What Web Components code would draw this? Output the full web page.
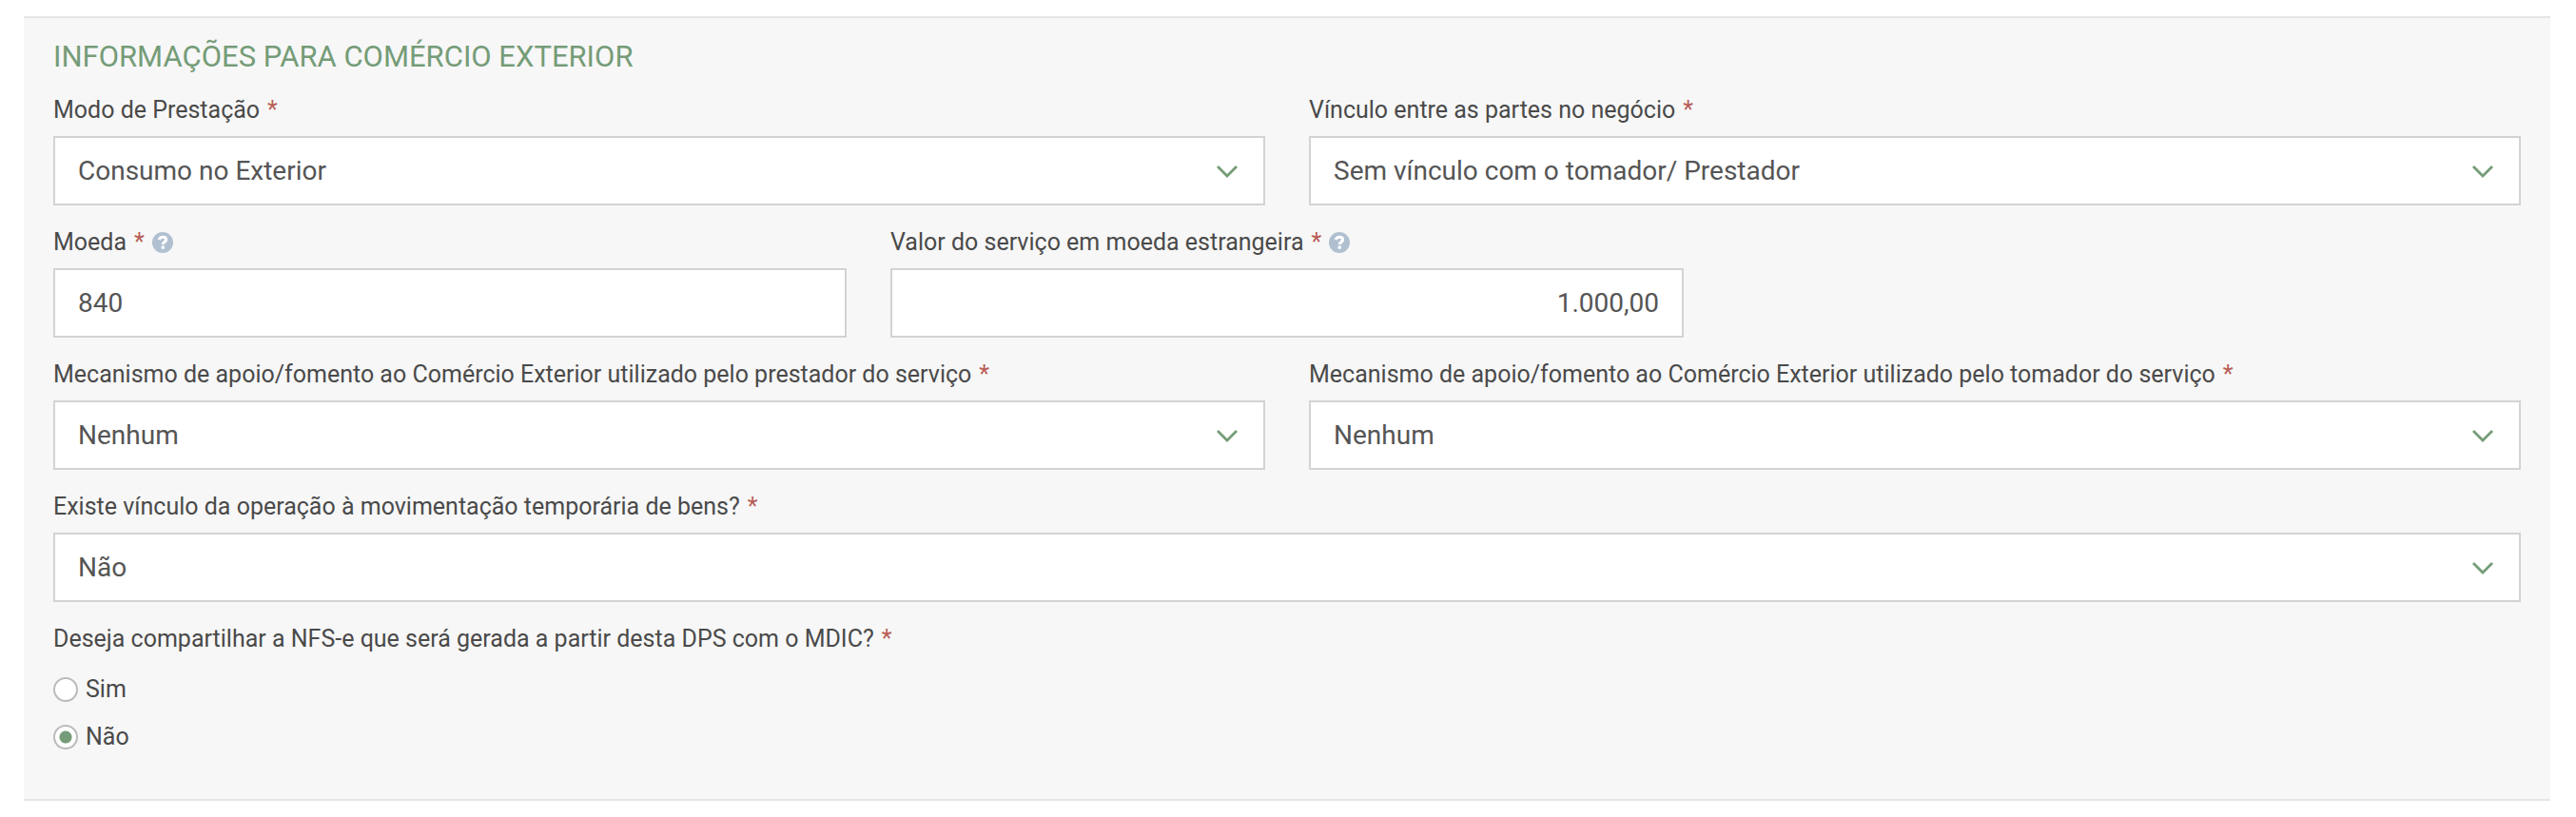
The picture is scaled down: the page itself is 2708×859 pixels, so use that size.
<!DOCTYPE html>
<html lang="pt-BR">
<head>
<meta charset="utf-8">
<meta name="viewport" content="width=device-width, initial-scale=1">
<title>Informações para Comércio Exterior</title>
<style>
    body {
        margin: 0;
        padding: 17px 27px 17px 25px;
        background: #fff;
        color: #4a4a4a;
        font-family: Roboto, "Liberation Sans", sans-serif;
        font-size: 25px;
        line-height: 32px;
        --green: #759c78;
        --red: #b85c55;
        --line: #d3d3d3;
        --value: #555;
    }
</style>
</head>
<body>
<form-panel heading="INFORMAÇÕES PARA COMÉRCIO EXTERIOR">
    <form-row columns="2">
        <select-field label="Modo de Prestação" options="Consumo no Exterior|Transfronteiriço|Presença Comercial no Brasil"></select-field>
        <select-field label="Vínculo entre as partes no negócio" options="Sem vínculo com o tomador/ Prestador|Controlada|Controladora|Coligada"></select-field>
    </form-row>
    <form-row columns="3">
        <text-field label="Moeda" value="840" help></text-field>
        <text-field label="Valor do serviço em moeda estrangeira" value="1.000,00" align="right" help></text-field>
    </form-row>
    <form-row columns="2">
        <select-field label="Mecanismo de apoio/fomento ao Comércio Exterior utilizado pelo prestador do serviço" options="Nenhum"></select-field>
        <select-field label="Mecanismo de apoio/fomento ao Comércio Exterior utilizado pelo tomador do serviço" options="Nenhum"></select-field>
    </form-row>
    <form-row columns="1">
        <select-field label="Existe vínculo da operação à movimentação temporária de bens?" options="Não|Sim"></select-field>
    </form-row>
    <form-row columns="1">
        <radio-field label="Deseja compartilhar a NFS-e que será gerada a partir desta DPS com o MDIC?" options="Sim|Não" value="Não"></radio-field>
    </form-row>
</form-panel>

<script>
const fieldStyles = `
    :host {
        display: block;
        min-width: 0;
    }
    .label {
        display: flex;
        align-items: center;
        margin-bottom: 11px;
        padding: 0;
    }
    .required {
        margin-left: 8px;
        color: var(--red);
    }
    help-icon {
        margin-left: 8px;
    }
    .control {
        display: block;
        box-sizing: border-box;
        width: 100%;
        height: 73px;
        margin: 0;
        padding: 0 24px;
        border: 2px solid var(--line);
        border-radius: 0;
        background: #fff;
        color: var(--value);
        font: inherit;
        font-size: 28px;
    }
    .control:focus {
        outline: none;
        border-color: var(--green);
    }
`;

class FormPanel extends HTMLElement {
    constructor() {
        super();
        this.attachShadow({ mode: 'open' });
    }

    connectedCallback() {
        this.shadowRoot.innerHTML = `
            <style>
                :host {
                    display: block;
                    padding: 23px 31px 49px;
                    border-top: 2px solid #e6e6e6;
                    border-bottom: 2px solid #e6e6e6;
                    background: #f7f7f7;
                }
                h2 {
                    margin: 0 0 22px;
                    color: var(--green);
                    font-size: 31px;
                    font-weight: 400;
                    line-height: 36px;
                }
                .rows {
                    display: flex;
                    flex-direction: column;
                    gap: 23px;
                }
            </style>
            <section aria-labelledby="heading">
                <h2 id="heading">${this.getAttribute('heading')}</h2>
                <div class="rows"><slot></slot></div>
            </section>
        `;
    }
}

class FormRow extends HTMLElement {
    constructor() {
        super();
        this.attachShadow({ mode: 'open' });
    }

    connectedCallback() {
        this.shadowRoot.innerHTML = `
            <style>
                :host {
                    display: grid;
                    grid-template-columns: repeat(${this.getAttribute('columns')}, minmax(0, 1fr));
                    gap: 46px;
                }
            </style>
            <slot></slot>
        `;
    }
}

class HelpIcon extends HTMLElement {
    constructor() {
        super();
        this.attachShadow({ mode: 'open' });
    }

    connectedCallback() {
        this.shadowRoot.innerHTML = `
            <style>
                :host {
                    display: block;
                }
                svg {
                    display: block;
                    width: 22px;
                    height: 22px;
                }
            </style>
            <svg viewBox="0 0 22 22" aria-hidden="true">
                <circle cx="11" cy="11" r="11" fill="#b0c0d0"/>
                <path d="M7.1 8C7.8 6.2 9.1 5.2 11 5.2c2.2 0 3.6 1.2 3.6 2.9 0 2.5-3.3 2.4-3.3 4.8" fill="none" stroke="#fff" stroke-width="3.1"/>
                <rect x="9.6" y="14.5" width="3.3" height="3.2" fill="#fff"/>
            </svg>
        `;
    }
}

class SelectField extends HTMLElement {
    constructor() {
        super();
        this.attachShadow({ mode: 'open' });
    }

    connectedCallback() {
        const options = this.getAttribute('options').split('|');
        this.shadowRoot.innerHTML = `
            <style>
                ${fieldStyles}
                .box {
                    display: grid;
                    align-items: center;
                }
                .box > * {
                    grid-area: 1 / 1;
                }
                select {
                    appearance: none;
                }
                svg {
                    justify-self: end;
                    width: 22px;
                    height: 14px;
                    margin-right: 29px;
                    pointer-events: none;
                }
            </style>
            <label class="label" for="control">${this.getAttribute('label')}<span class="required">*</span></label>
            <div class="box">
                <select class="control" id="control" required>
                    ${options.map(option => `<option>${option}</option>`).join('')}
                </select>
                <svg viewBox="0 0 22 14" aria-hidden="true">
                    <path d="M1 2 11 12 21 2" fill="none" stroke="var(--green)" stroke-width="2.8"/>
                </svg>
            </div>
        `;
    }
}

class TextField extends HTMLElement {
    constructor() {
        super();
        this.attachShadow({ mode: 'open' });
    }

    connectedCallback() {
        this.shadowRoot.innerHTML = `
            <style>
                ${fieldStyles}
                input {
                    text-align: ${this.getAttribute('align') || 'left'};
                }
            </style>
            <label class="label" for="control">
                ${this.getAttribute('label')}<span class="required">*</span>
                ${this.hasAttribute('help') ? '<help-icon></help-icon>' : ''}
            </label>
            <input class="control" id="control" type="text" value="${this.getAttribute('value') || ''}" required>
        `;
    }
}

class RadioField extends HTMLElement {
    constructor() {
        super();
        this.attachShadow({ mode: 'open' });
    }

    connectedCallback() {
        const options = this.getAttribute('options').split('|');
        const value = this.getAttribute('value');
        this.shadowRoot.innerHTML = `
            <style>
                ${fieldStyles}
                fieldset {
                    min-width: 0;
                    margin: 0;
                    padding: 0;
                    border: 0;
                }
                .options {
                    display: flex;
                    flex-direction: column;
                    align-items: flex-start;
                    gap: 18px;
                    padding-top: 10px;
                }
                .option {
                    display: flex;
                    align-items: center;
                    gap: 8px;
                }
                input {
                    appearance: none;
                    box-sizing: border-box;
                    width: 26px;
                    height: 26px;
                    margin: 0;
                    border: 2px solid #bbb;
                    border-radius: 50%;
                    background: #fff;
                }
                input:checked {
                    background: radial-gradient(circle, var(--green) 6px, #fff 7px);
                }
            </style>
            <fieldset>
                <legend class="label">${this.getAttribute('label')}<span class="required">*</span></legend>
                <div class="options">
                    ${options.map(option => `
                        <label class="option">
                            <input type="radio" name="choice" value="${option}" ${option === value ? 'checked' : ''}>
                            <span>${option}</span>
                        </label>
                    `).join('')}
                </div>
            </fieldset>
        `;
    }
}

customElements.define('help-icon', HelpIcon);
customElements.define('form-panel', FormPanel);
customElements.define('form-row', FormRow);
customElements.define('select-field', SelectField);
customElements.define('text-field', TextField);
customElements.define('radio-field', RadioField);
</script>
</body>
</html>
